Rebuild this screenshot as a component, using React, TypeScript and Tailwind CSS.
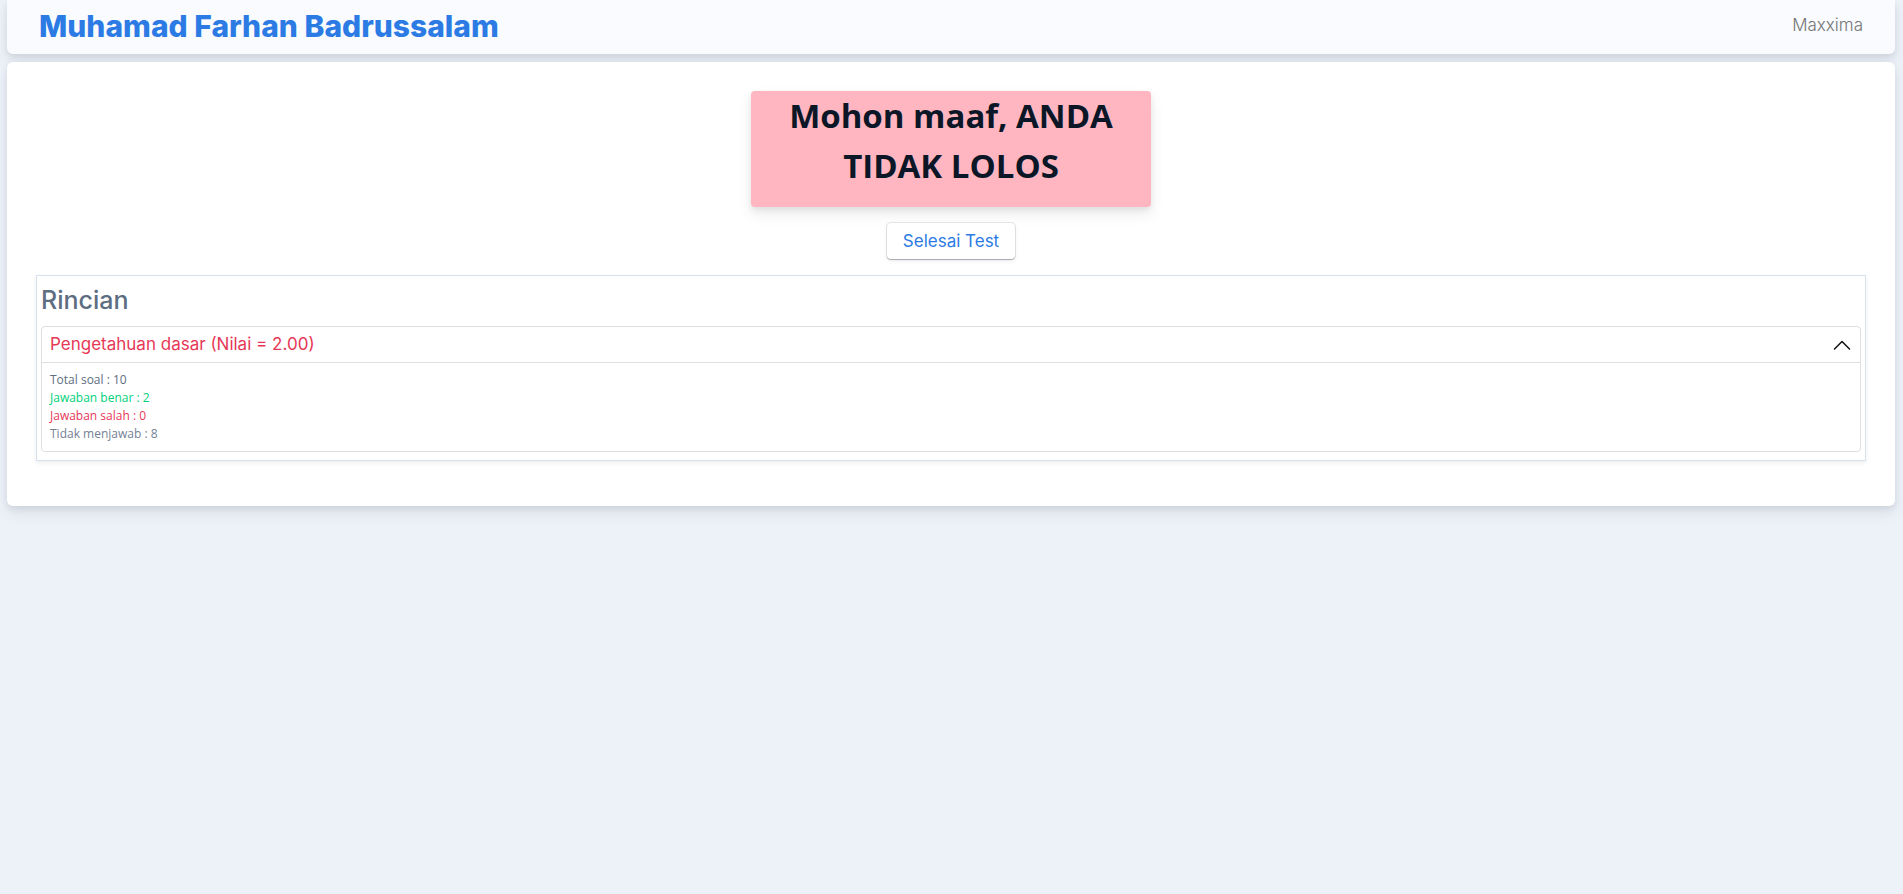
import { useState } from "react";

const cardShadow = "shadow-[0_7px_14px_0_rgba(65,69,88,0.1),0_3px_6px_0_rgba(0,0,0,0.07)]";

const results = [
  { label: "Total soal", value: 10, color: "text-[#5e6e82]" },
  { label: "Jawaban benar", value: 2, color: "text-[#00d27a]" },
  { label: "Jawaban salah", value: 0, color: "text-[#e63757]" },
  { label: "Tidak menjawab", value: 8, color: "text-[#748194]" },
];

export default function App() {
  const [open, setOpen] = useState(true);

  return (
    <div className="min-h-screen bg-[#edf2f9] pr-2 pb-8 pl-[7px] font-['Open_Sans','Noto_Sans',sans-serif] text-[#5e6e82]">
      <header
        className={`flex h-[54px] items-center justify-between rounded-b-md bg-[#f9fbfe] pr-8 pb-[3px] pl-8 font-['Inter',sans-serif] ${cardShadow}`}
      >
        <h1 className="text-[30px] leading-9 font-extrabold text-[#2c7be5]">Muhamad Farhan Badrussalam</h1>
        <span className="text-[17px] leading-[27px] font-light text-[#757575]">Maxxima</span>
      </header>

      <main className={`mt-2 flex flex-col items-center rounded-md bg-white px-[29px] pt-[29px] pb-[45px] ${cardShadow}`}>
        <div className={`w-[400px] rounded bg-[#ffb6c1] px-4 pb-4 text-center ${cardShadow}`}>
          <h2 className="text-[33px] leading-[50px] font-bold text-[#0b1727]">Mohon maaf, ANDA TIDAK LOLOS</h2>
        </div>

        <button
          type="button"
          className="mt-4 h-9 rounded bg-white px-4 font-['Inter',sans-serif] text-[17px] leading-[27px] font-normal text-[#2c7be5] shadow-[0_0_0_1px_rgba(43,45,80,0.1),0_2px_5px_0_rgba(43,45,80,0.08),0_1px_1px_0_rgba(0,0,0,0.25)]"
        >
          Selesai Test
        </button>

        <section className="mt-4 w-full border border-[#d8e2ef] px-1 pb-2 font-['Inter',sans-serif] shadow-[0_2px_4px_0_rgba(0,0,0,0.075)]">
          <h3 className="flex h-[50px] items-center text-[25px] font-medium text-[#5e6e82]">Rincian</h3>
          <div className="rounded border border-[#dddfe1]">
            <button
              type="button"
              aria-expanded={open}
              aria-controls="score-details"
              onClick={() => setOpen(!open)}
              className="flex h-[35px] w-full items-center justify-between px-2 text-left text-[17px] leading-[27px] font-normal text-[#e63757]"
            >
              <span>Pengetahuan dasar (Nilai = 2.00)</span>
              <svg
                aria-hidden="true"
                viewBox="0 0 20 20"
                className={open ? "size-5" : "size-5 rotate-180"}
                fill="none"
                stroke="#111111"
                strokeWidth="1.5"
                strokeLinecap="round"
                strokeLinejoin="round"
              >
                <path d="M2.5 14 10 6.5 17.5 14" />
              </svg>
            </button>
            {open && (
              <div
                id="score-details"
                className="border-t border-[#dddfe1] px-2 py-2 font-['Open_Sans','Noto_Sans',sans-serif] text-xs leading-[18px]"
              >
                {results.map((row) => (
                  <p key={row.label} className={row.color}>
                    {row.label} : {row.value}
                  </p>
                ))}
              </div>
            )}
          </div>
        </section>
      </main>
    </div>
  );
}
